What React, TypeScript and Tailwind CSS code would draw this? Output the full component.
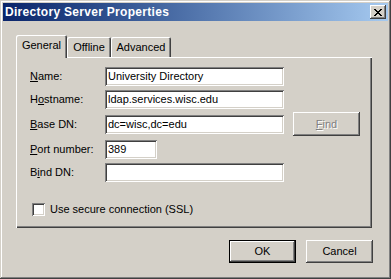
import React from 'react';

const font = "font-['Liberation_Sans',Tahoma,Arial,sans-serif]";

// sunken edit box bevel
const sunken =
  'bg-white shadow-[inset_1px_1px_0_#808080,inset_-1px_-1px_0_#ffffff,inset_2px_2px_0_#404040,inset_-2px_-2px_0_#d4d0c8]';

// raised button bevel
const raised =
  'bg-[#d4d0c8] shadow-[inset_-1px_-1px_0_#404040,inset_1px_1px_0_#ffffff,inset_-2px_-2px_0_#808080]';

const Field: React.FC<{ label: React.ReactNode; value: string; width?: string; className?: string }> = ({
  label,
  value,
  width = 'w-[179px]',
  className = '',
}) => (
  <div className={`flex items-center ${className}`}>
    <div className="w-[75px] text-[11px] leading-none">{label}</div>
    <div className={`${sunken} ${width} h-[19px] flex items-center pl-[3px] text-[11px] leading-none`}>{value}</div>
  </div>
);

const Tab: React.FC<{ label: string; active?: boolean; className?: string }> = ({ label, active, className = '' }) => (
  <div
    className={`flex items-center justify-center text-[11px] leading-none bg-[#d4d0c8] rounded-t-[2px] ${
      active
        ? 'h-[23px] -mb-px relative z-10 pb-[2px] shadow-[inset_1px_1px_0_#ffffff,inset_-1px_0_0_#404040,inset_-2px_0_0_#808080]'
        : 'h-[20px] pt-[1px] shadow-[inset_1px_1px_0_#ffffff,inset_-1px_0_0_#404040,inset_-2px_0_0_#808080]'
    } ${className}`}
  >
    {label}
  </div>
);

const App: React.FC = () => {
  return (
    <div
      className={`w-[391px] h-[279px] bg-[#d4d0c8] text-black ${font} p-[3px] flex flex-col shadow-[inset_-1px_-1px_0_#404040,inset_1px_1px_0_#d4d0c8,inset_-2px_-2px_0_#808080,inset_2px_2px_0_#ffffff]`}
    >
      {/* Title bar */}
      <div className="h-[18px] bg-gradient-to-r from-[#0a246a] to-[#a6caf0] flex items-center justify-between pl-[2px] pr-[2px]">
        <span className="text-white font-bold text-[12px] tracking-[0.3px] leading-none">Directory Server Properties</span>
        <div className={`${raised} w-[16px] h-[14px] flex items-center justify-center`}>
          <svg width="8" height="7" viewBox="0 0 8 7" shapeRendering="crispEdges">
            <path
              d="M0 0h2v1h-2zM6 0h2v1h-2zM1 1h2v1h-2zM5 1h2v1h-2zM2 2h4v1h-4zM3 3h2v1h-2zM2 4h4v1h-4zM1 5h2v1h-2zM5 5h2v1h-2zM0 6h2v1h-2zM6 6h2v1h-2z"
              fill="#000"
            />
          </svg>
        </div>
      </div>

      {/* Tabs + page */}
      <div className="pl-[13px] pr-[16px] pt-[14px]">
        <div className="flex items-end h-[22px]">
          <Tab label="General" active className="w-[51px]" />
          <Tab label="Offline" className="w-[44px]" />
          <Tab label="Advanced" className="w-[60px]" />
        </div>
        <div className="h-[171px] shadow-[inset_1px_1px_0_#ffffff,inset_-1px_-1px_0_#404040,inset_-2px_-2px_0_#808080] pl-[14px] pt-[10px]">
          <Field
            label={
              <>
                <span className="underline">N</span>ame:
              </>
            }
            value="University Directory"
          />
          <Field
            className="mt-[4px]"
            label={
              <>
                H<span className="underline">o</span>stname:
              </>
            }
            value="ldap.services.wisc.edu"
          />
          <div className="flex items-start mt-[6px]">
            <Field
              label={
                <>
                  <span className="underline">B</span>ase DN:
                </>
              }
              value="dc=wisc,dc=edu"
            />
            <div
              className={`${raised} ml-[9px] -mt-[3px] w-[67px] h-[24px] flex items-center justify-center text-[11px] leading-none text-[#808080] [text-shadow:1px_1px_0_#ffffff]`}
            >
              <span>
                <span className="underline">F</span>ind
              </span>
            </div>
          </div>
          <Field
            className="mt-[4px]"
            width="w-[52px]"
            label={
              <>
                <span className="underline">P</span>ort number:
              </>
            }
            value="389"
          />
          <Field
            className="mt-[4px]"
            label={
              <>
                B<span className="underline">i</span>nd DN:
              </>
            }
            value=""
          />
          <div className="flex items-center mt-[21px] pl-[2px]">
            <div className={`${sunken} w-[13px] h-[13px]`} />
            <span className="ml-[5px] text-[11px] leading-none">Use secure connection (SSL)</span>
          </div>
        </div>
      </div>

      {/* Buttons */}
      <div className="flex justify-end gap-[10px] pr-[15px] mt-[12px]">
        <div className="w-[67px] h-[23px] border border-black">
          <div className={`${raised} w-full h-full flex items-center justify-center text-[11px] leading-none`}>OK</div>
        </div>
        <div className={`${raised} w-[67px] h-[23px] flex items-center justify-center text-[11px] leading-none`}>
          Cancel
        </div>
      </div>
    </div>
  );
};

export default App;
